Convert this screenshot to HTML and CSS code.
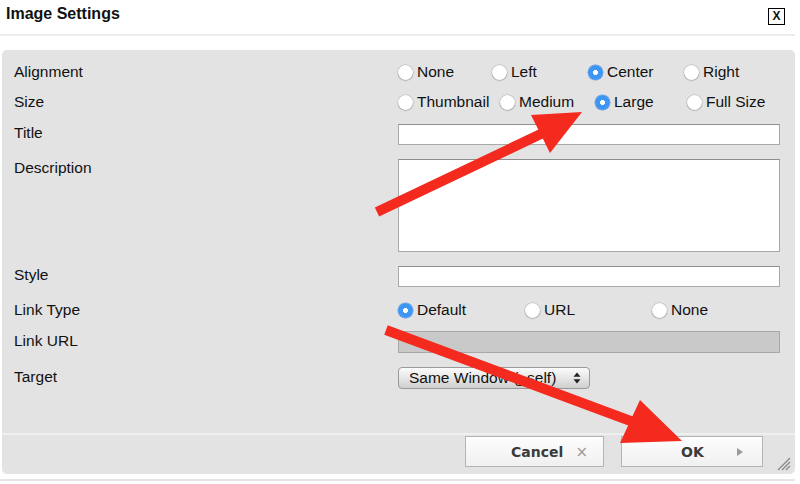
FILE: index.html
```html
<!DOCTYPE html>
<html>
<head>
<meta charset="utf-8">
<link rel="stylesheet" href="styles.css">
</head>
<body>
<div class="page">
  <header class="dlg-head">
    <h1 class="dlg-title">Image Settings</h1>
    <span class="close-btn">X</span>
  </header>
  <section class="panel">
    <div class="form">
      <div class="row row-radio first">
        <span class="lbl">Alignment</span>
        <div class="radios cols-align">
          <label class="opt"><input type="radio" name="al"><span>None</span></label>
          <label class="opt"><input type="radio" name="al"><span>Left</span></label>
          <label class="opt"><input type="radio" name="al" checked><span>Center</span></label>
          <label class="opt"><input type="radio" name="al"><span>Right</span></label>
        </div>
      </div>
      <div class="row row-radio">
        <span class="lbl">Size</span>
        <div class="radios cols-size">
          <label class="opt"><input type="radio" name="sz"><span>Thumbnail</span></label>
          <label class="opt"><input type="radio" name="sz"><span>Medium</span></label>
          <label class="opt"><input type="radio" name="sz" checked><span>Large</span></label>
          <label class="opt"><input type="radio" name="sz"><span>Full Size</span></label>
        </div>
      </div>
      <div class="row gap7">
        <span class="lbl lift">Title</span>
        <input class="field" type="text">
      </div>
      <div class="row gap14 top">
        <span class="lbl">Description</span>
        <textarea class="field area"></textarea>
      </div>
      <div class="row gap14">
        <span class="lbl lift">Style</span>
        <input class="field" type="text">
      </div>
      <div class="row gap13 row-lt">
        <span class="lbl">Link Type</span>
        <div class="radios cols-link">
          <label class="opt"><input type="radio" name="lt" checked><span>Default</span></label>
          <label class="opt"><input type="radio" name="lt"><span>URL</span></label>
          <label class="opt"><input type="radio" name="lt"><span>None</span></label>
        </div>
      </div>
      <div class="row gap11">
        <span class="lbl lift">Link URL</span>
        <input class="field disabled" type="text" disabled>
      </div>
      <div class="row gap14">
        <span class="lbl lift">Target</span>
        <div class="select">
          <span>Same Window (_self)</span>
          <svg class="updown" width="8" height="12" viewBox="0 0 8 12"><path d="M4 0.5 L7.5 4.8 H0.5 Z M4 11.5 L7.5 7.2 H0.5 Z" fill="#222"/></svg>
        </div>
      </div>
    </div>
    <footer class="footer">
      <button class="btn"><span class="btn-text">Cancel</span><span class="btn-ico">&#215;</span></button>
      <button class="btn btn-ok"><span class="btn-text">OK</span><svg class="btn-tri" width="6" height="8" viewBox="0 0 6 8"><path d="M0 0 L6 4 L0 8 Z" fill="#9a9a9a"/></svg></button>
      <svg class="grip" width="15" height="15" viewBox="0 0 15 15"><path d="M14 2 L2 14 M14 6 L6 14 M14 10 L10 14" stroke="#8a8a8a" stroke-width="1.4"/></svg>
    </footer>
  </section>
  <div class="bottom-line"></div>
  <svg class="annot" width="800" height="484" viewBox="0 0 800 484">
    <line x1="377" y1="212" x2="545" y2="132" stroke="#f32a1d" stroke-width="10"/>
    <polygon points="531,115 582,112 550,153" fill="#f32a1d"/>
    <line x1="386" y1="330" x2="636" y2="423" stroke="#f32a1d" stroke-width="10"/>
    <polygon points="620,443 640,400 682,441" fill="#f32a1d"/>
  </svg>
</div>
</body>
</html>
```

FILE: styles.css
```css
html, body {
  margin: 0;
  padding: 0;
  background: #fff;
}
body {
  font-family: "Liberation Sans", Arial, Helvetica, sans-serif;
  color: #111;
}
.page {
  position: relative;
  width: 800px;
  height: 484px;
  overflow: hidden;
}
.dlg-head {
  height: 34px;
  margin-right: 5px;
  border-bottom: 2px solid #ececec;
  display: flex;
  align-items: flex-start;
  justify-content: space-between;
  padding: 0 10px 0 6px;
}
.dlg-title {
  margin: 4px 0 0;
  font-size: 16px;
  font-weight: bold;
  line-height: 20px;
}
.close-btn {
  margin-top: 8px;
  width: 15px;
  height: 15px;
  border: 1.5px solid #000;
  font-size: 12px;
  font-weight: bold;
  line-height: 15px;
  text-align: center;
}
.panel {
  margin: 14px 5px 0 2px;
  height: 424px;
  background: #e3e3e3;
  border-radius: 5px;
  display: flex;
  flex-direction: column;
}
.form {
  height: 376px;
  padding: 7px 0 0 12px;
  border-bottom: 2px solid #efefef;
}
.row {
  display: grid;
  grid-template-columns: 384px 382px;
  align-items: center;
}
.row.top {
  align-items: start;
}
.row-radio {
  height: 30px;
}
.row-lt {
  height: 20px;
}
.gap7 { margin-top: 7px; }
.gap11 { margin-top: 11px; }
.gap13 { margin-top: 13px; }
.gap14 { margin-top: 14px; }
.lbl {
  font-size: 15.5px;
  line-height: 18px;
  color: #111;
}
.lift {
  margin-top: -3px;
}
.radios {
  display: grid;
  align-items: center;
}
.cols-align { grid-template-columns: 94px 96px 96px auto; }
.cols-size { grid-template-columns: 102px 95px 92px auto; }
.cols-link { grid-template-columns: 127px 127px auto; }
.opt {
  display: flex;
  align-items: center;
  gap: 4px;
  font-size: 15.5px;
  line-height: 18px;
  color: #111;
  white-space: nowrap;
}
.opt input {
  appearance: none;
  -webkit-appearance: none;
  margin: 1px 0 0;
  width: 15px;
  height: 15px;
  border-radius: 50%;
  background: #fff;
  box-shadow: 0 0 0 0.5px rgba(0,0,0,0.18), 0 0.5px 1.5px rgba(0,0,0,0.25);
  flex: none;
}
.opt input:checked {
  background: radial-gradient(circle, #fff 0 2.2px, #3e96f4 2.8px);
  box-shadow: 0 0 0 0.5px rgba(40,110,210,0.6);
}
.field {
  box-sizing: border-box;
  width: 382px;
  height: 21px;
  margin: 0;
  border: 1px solid #a9a9a9;
  border-top-color: #8e8e8e;
  background: #fff;
  font: inherit;
  padding: 0 4px;
}
.area {
  height: 93px;
  resize: none;
  display: block;
}
.disabled {
  height: 22px;
  background: #c9c9c9;
  border-color: #a8a8a8;
}
.select {
  box-sizing: border-box;
  width: 192px;
  height: 22px;
  border: 1px solid #9a9a9a;
  border-radius: 4px;
  background: linear-gradient(#fbfbfb, #e6e6e6 50%, #cfcfcf);
  display: flex;
  align-items: center;
  justify-content: space-between;
  padding: 0 8px 0 10px;
  font-size: 15.5px;
  color: #111;
  white-space: nowrap;
}
.footer {
  flex: 1;
  display: flex;
  align-items: flex-start;
  justify-content: flex-end;
  padding: 1px 4px 0 0;
}
.btn {
  box-sizing: border-box;
  width: 139px;
  height: 31px;
  margin: 0;
  border: 1px solid #b4b4b4;
  background: linear-gradient(#fdfdfd, #f0f0f0);
  display: flex;
  align-items: center;
  justify-content: space-between;
  padding: 1px 15px 0 45px;
  font-family: "DejaVu Sans", Verdana, sans-serif;
}
.btn-ok {
  width: 142px;
  margin-left: 17px;
  padding: 1px 19px 0 59px;
}
.btn-text {
  font-size: 14px;
  font-weight: bold;
  color: #3a3a3a;
}
.btn-ico {
  font-size: 15px;
  color: #a09a90;
  font-family: "DejaVu Sans", sans-serif;
}
.grip {
  align-self: flex-end;
  margin: 0 0 3px 13px;
}
.bottom-line {
  margin: 5px 5px 0 0;
  border-top: 2px solid #e6e6e6;
}
.annot {
  position: absolute;
  left: 0;
  top: 0;
  pointer-events: none;
}
```
